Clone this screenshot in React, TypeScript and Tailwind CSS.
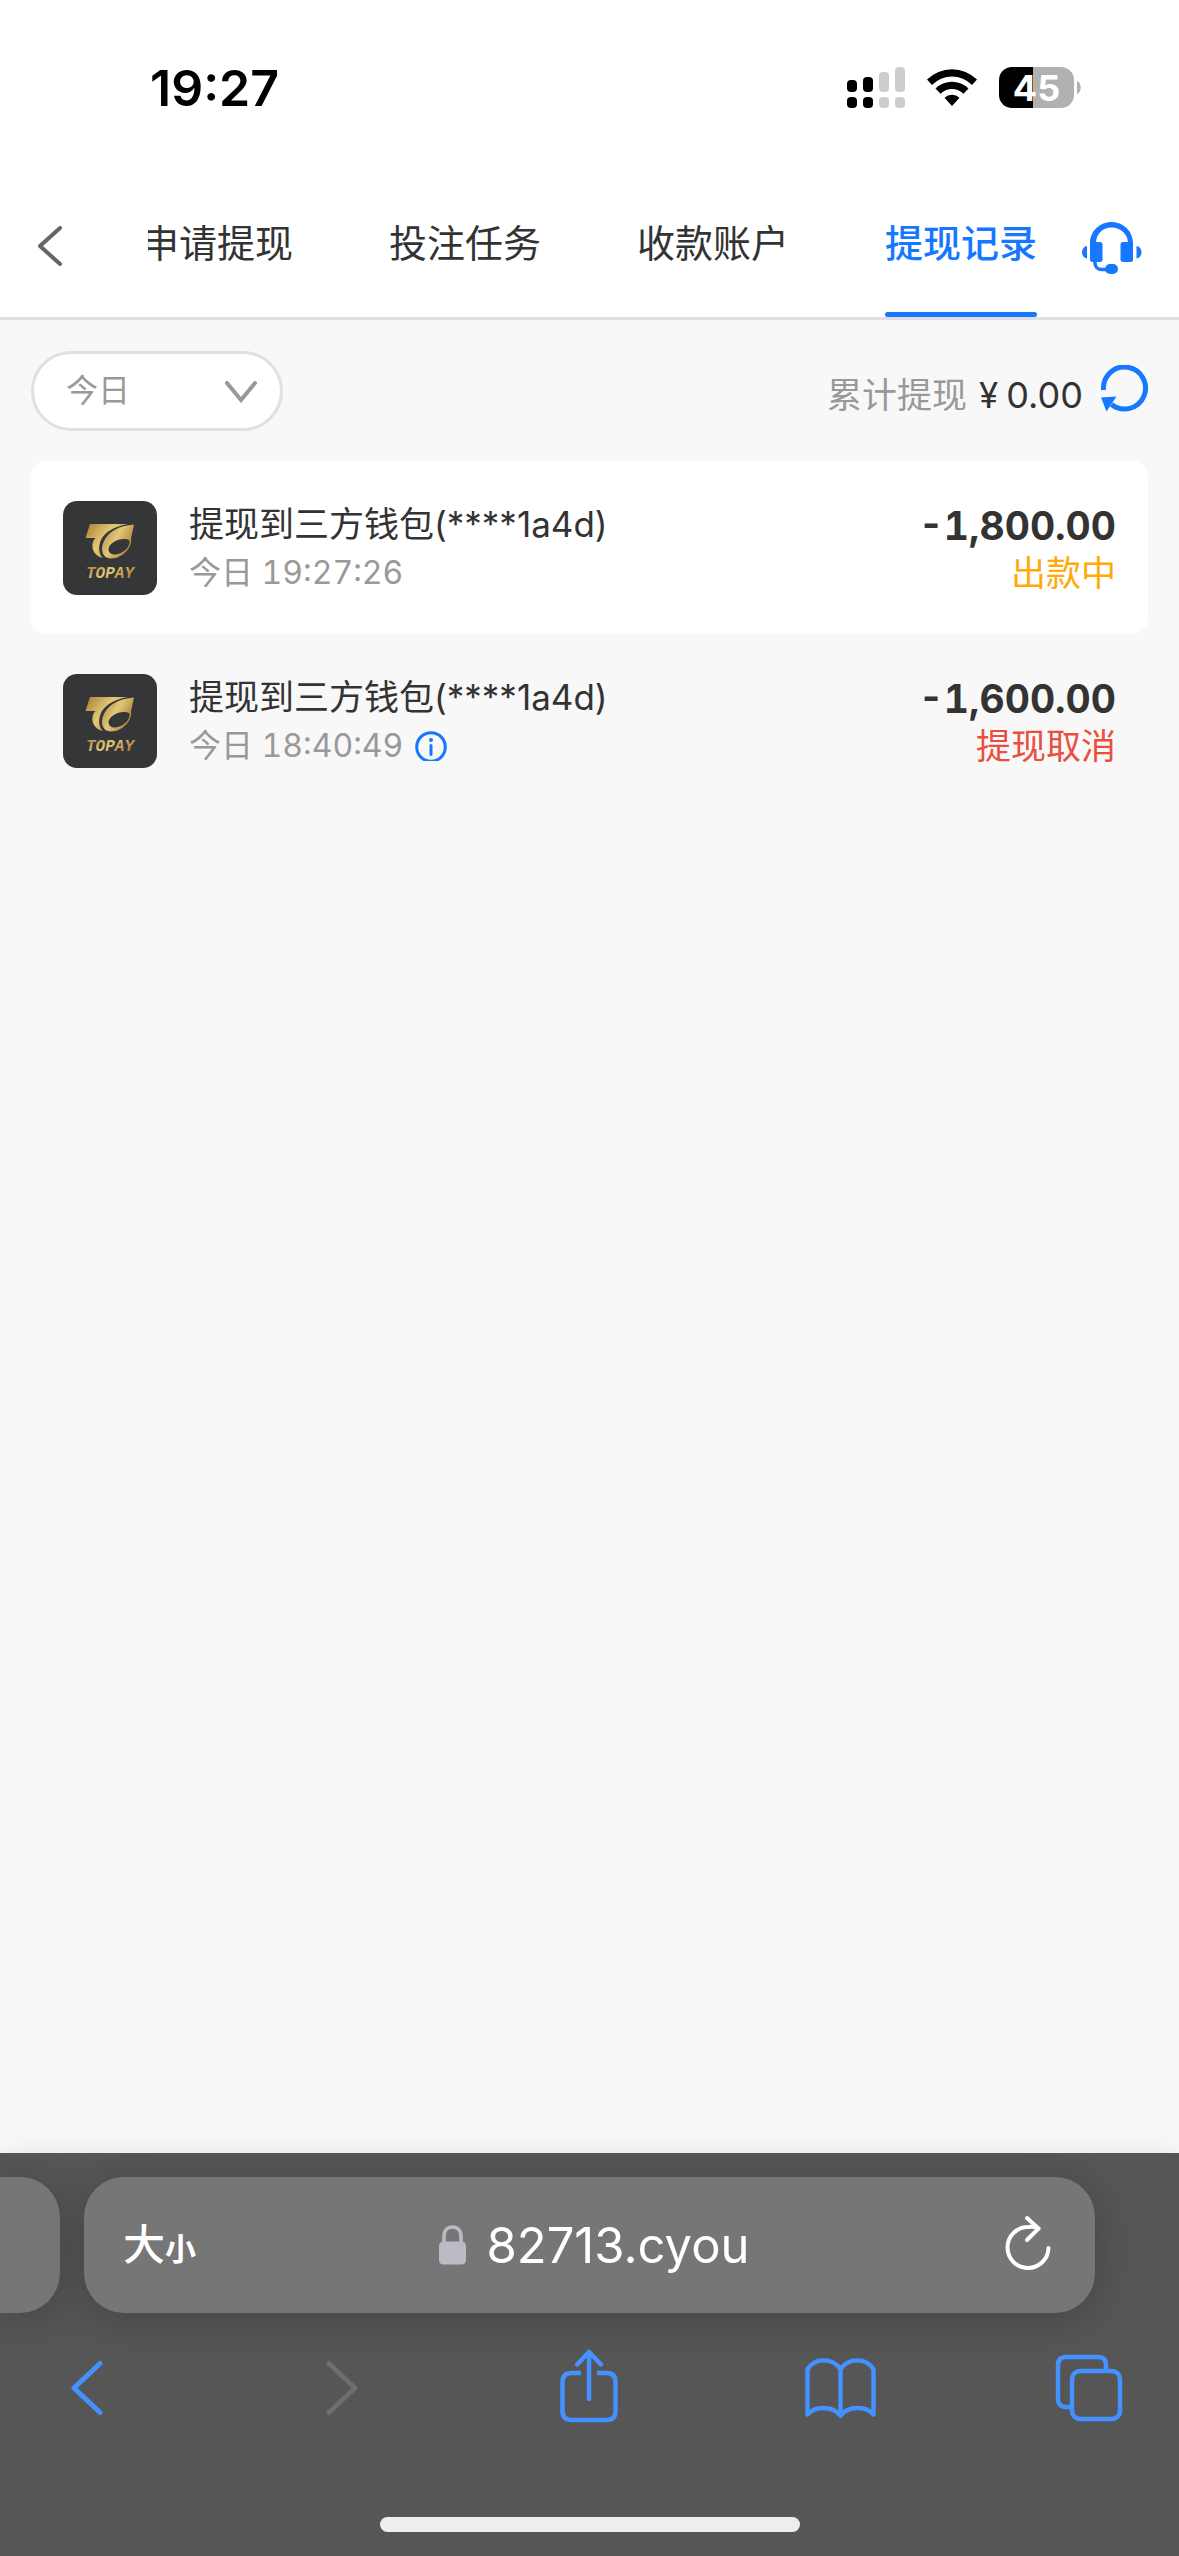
import React from "react";

const tabs = ["申请提现", "投注任务", "收款账户", "提现记录"];

type Entry = {
  title: string;
  time: string;
  info?: boolean;
  amount: string;
  status: string;
  tone: "pending" | "cancelled";
};

const entries: Entry[] = [
  { title: "提现到三方钱包(****1a4d)", time: "今日 19:27:26", amount: "-1,800.00", status: "出款中", tone: "pending" },
  { title: "提现到三方钱包(****1a4d)", time: "今日 18:40:49", info: true, amount: "-1,600.00", status: "提现取消", tone: "cancelled" },
];

function SignalIcon() {
  return (
    <svg width="58" height="41" viewBox="0 0 58 41" aria-hidden="true">
      <g fill="#000">
        <rect x="0" y="13" width="10" height="12" rx="4" />
        <rect x="16" y="10" width="10" height="15" rx="4" />
        <rect x="0" y="30" width="10" height="11" rx="4" />
        <rect x="16" y="30" width="10" height="11" rx="4" />
      </g>
      <g fill="#ccc">
        <rect x="32" y="5" width="10" height="20" rx="4" />
        <rect x="48" y="0" width="10" height="25" rx="4" />
        <rect x="32" y="30" width="10" height="11" rx="4" />
        <rect x="48" y="30" width="10" height="11" rx="4" />
      </g>
    </svg>
  );
}

function WifiIcon() {
  return (
    <svg width="50" height="37" viewBox="0 0 50 37" aria-hidden="true">
      <path d="M0 10.500a35.500 35.500 0 0 1 50 0L45 16a28 28 0 0 0-40 0z" />
      <path d="M8.500 19.500a23.500 23.500 0 0 1 33 0l-5 5.200a16.500 16.500 0 0 0-23 0z" />
      <path d="M17.500 28.800a11 11 0 0 1 15 0L25 37z" />
    </svg>
  );
}

function HeadsetIcon() {
  return (
    <svg width="60" height="52" viewBox="0 0 60 52" fill="#1678ff" aria-hidden="true">
      <path d="M8 26V21C8 9 18 0 29.500 0S51 9 51 21v5h-5v-5c0-9-7.500-15.500-16.500-15.500S14 12 14 21v2z" />
      <rect x="8" y="20" width="12.500" height="20" rx="2.500" />
      <rect x="38.500" y="20" width="12.500" height="20" rx="2.500" />
      <path d="M5 24v12.500C2 36 0 33.500 0 30.300S2 24.500 5 24z" />
      <path d="M54.500 24v12.500c3-.5 5-3 5-6.200s-2-5.800-5-6.300z" />
      <path d="M13 38v3c0 4 3 6.500 6.500 6.500H27" fill="none" stroke="#1678ff" strokeWidth="3.500" />
      <rect x="23" y="42" width="13" height="10" rx="5" />
    </svg>
  );
}

function RefreshIcon() {
  return (
    <svg width="47" height="47" viewBox="0 0 47 47" fill="none" aria-hidden="true">
      <path d="M2.600 25A21 21 0 1 1 10.500 39.500" stroke="#1678ff" strokeWidth="5" />
      <path d="M0 32.500 15.500 31.500 5.500 46.500z" fill="#1678ff" />
    </svg>
  );
}

function WalletLogo() {
  return (
    <svg className="shrink-0" width="94" height="94" viewBox="0 0 94 94" role="img" aria-label="TOPAY">
      <defs>
        <linearGradient id="gold" x1="0" y1="0" x2="1" y2="0.600">
          <stop offset="0" stopColor="#a87b35" />
          <stop offset="0.500" stopColor="#e3c878" />
          <stop offset="1" stopColor="#a67a32" />
        </linearGradient>
      </defs>
      <rect width="94" height="94" rx="14" fill="#353638" />
      <path
        fill="url(#gold)"
        d="M27 23H65C52 25.500 41 31 37.500 40 35 47 36 53 40 57 33 55.500 28.500 50 29.500 43 30 40 31 38 32.500 37H22.500z"
      />
      <path
        fill="url(#gold)"
        fillRule="evenodd"
        d="M71 23.500 68 37.500C69.500 46 60 57.500 48 57.500 39 57.500 37 48 41 40 45 31 56 24.500 71 23.500zM66.500 39.500C60 35 46 41 45.500 48 45.500 52 48.500 53.500 52 53.500 60 53 67.500 46 66.500 39.500z"
      />
      <text
        x="23"
        y="77"
        fill="url(#gold)"
        fontFamily="'Liberation Mono', monospace"
        fontSize="16"
        fontWeight="700"
        fontStyle="italic"
      >
        TOPAY
      </text>
    </svg>
  );
}

function InfoIcon() {
  return (
    <svg width="32" height="30" viewBox="0 0 32 30" fill="none" aria-hidden="true">
      <circle cx="16" cy="16" r="14.300" stroke="#1678ff" strokeWidth="3" />
      <circle cx="16" cy="9" r="2" fill="#1678ff" />
      <path d="M16 14.500v9" stroke="#1678ff" strokeWidth="3" strokeLinecap="round" />
    </svg>
  );
}

function StatusBar() {
  return (
    <div className="flex h-[175px] items-center justify-between pr-[98px] pl-[150px]">
      <span className="text-[50px] leading-none font-semibold text-black">19:27</span>
      <div className="flex items-center">
        <SignalIcon />
        <span className="ml-[22px]">
          <WifiIcon />
        </span>
        <div className="ml-[22px] flex h-[41px] w-[75px] items-center justify-center rounded-[13px] bg-linear-to-r from-black from-45% to-[#b1b1b1] to-45% text-[36px] leading-none font-bold text-white">
          45
        </div>
        <svg className="ml-[3px]" width="4" height="13" viewBox="0 0 4 13" fill="#b1b1b1" aria-hidden="true">
          <path d="M0 0c5 2 5 11 0 13z" />
        </svg>
      </div>
    </div>
  );
}

function NavBar() {
  return (
    <nav className="flex h-[145px] items-stretch border-b-[3px] border-[#e0e0e0] pr-[37px]">
      <button aria-label="返回" className="flex w-[148px] shrink-0 items-center pl-[37px]">
        <svg width="26" height="40" viewBox="0 0 26 40" fill="none" stroke="#666" strokeWidth="4" strokeLinecap="round" strokeLinejoin="round" aria-hidden="true">
          <path d="M23 2 3 20l20 18" />
        </svg>
      </button>
      <div role="tablist" className="flex min-w-0 flex-1 justify-end gap-24 overflow-hidden">
        {tabs.map((tab, i) => {
          const active = i === 3;
          return (
            <button
              key={tab}
              role="tab"
              aria-selected={active}
              className={
                active
                  ? "flex shrink-0 flex-col items-center text-[38px] leading-[137px] font-medium text-[#1678ff]"
                  : "flex shrink-0 flex-col items-center text-[38px] leading-[137px] text-[#333]"
              }
            >
              {tab}
              {active && <span className="h-[5px] w-full rounded-full bg-[#1678ff]" />}
            </button>
          );
        })}
      </div>
      <button aria-label="客服" className="ml-[45px] flex shrink-0 items-center pt-1">
        <HeadsetIcon />
      </button>
    </nav>
  );
}

function FilterRow() {
  return (
    <div className="flex h-[141px] items-center justify-between px-[31px]">
      <div className="relative">
        <select
          aria-label="日期"
          className="h-20 w-[252px] appearance-none rounded-full border-[3px] border-[#e0e0e0] bg-white pl-8 text-[32px] text-[#999]"
        >
          <option>今日</option>
        </select>
        <svg className="pointer-events-none absolute top-[30px] right-[25px]" width="34" height="22" viewBox="0 0 34 22" fill="none" stroke="#999" strokeWidth="4" strokeLinecap="round" aria-hidden="true">
          <path d="M3 2l14 17L31 2" />
        </svg>
      </div>
      <div className="flex items-center leading-none">
        <p className="flex items-baseline pt-2 text-[35px]">
          <span className="text-[#999]">累计提现</span>
          <span className="ml-3 text-[#333]">¥</span>
          <span className="ml-2 text-[36px] text-[#333]">0.00</span>
        </p>
        <button aria-label="刷新" className="mb-1 ml-[18px]">
          <RefreshIcon />
        </button>
      </div>
    </div>
  );
}

function EntryRow({ entry, raised }: { entry: Entry; raised: boolean }) {
  return (
    <li
      className={
        raised
          ? "flex h-[173px] items-center rounded-2xl bg-white px-8"
          : "flex h-[173px] items-center rounded-2xl px-8"
      }
    >
      <WalletLogo />
      <div className="ml-8 flex-1 pt-0.5">
        <p className="text-[35px] leading-[48px] text-[#333]">{entry.title}</p>
        <p className="flex items-center text-[32px] leading-[50px] text-[#999] tabular-nums">
          {entry.time}
          {entry.info && (
            <button aria-label="详情" className="ml-3">
              <InfoIcon />
            </button>
          )}
        </p>
      </div>
      <div className="text-right">
        <p className="text-[39px] leading-[50px] font-bold text-[#333] tabular-nums">{entry.amount}</p>
        <p
          className={
            entry.tone === "pending"
              ? "text-[35px] leading-[44px] text-[#ffaa09]"
              : "text-[35px] leading-[44px] text-[#ea4e3d]"
          }
        >
          {entry.status}
        </p>
      </div>
    </li>
  );
}

function BrowserBar() {
  return (
    <footer className="overflow-hidden bg-[#565656] pt-6 pb-6 shadow-[0_0_24px_rgba(0,0,0,0.08)]">
      <div className="flex gap-6">
        <div className="h-[136px] w-[60px] shrink-0 rounded-r-[40px] bg-[#767676] shadow-[0_6px_40px_rgba(0,0,0,0.2)]" />
        <div className="mr-[84px] flex h-[136px] flex-1 items-center justify-between rounded-[40px] bg-[#767676] pr-[43px] pl-[39px] text-white shadow-[0_6px_40px_rgba(0,0,0,0.2)]">
          <button aria-label="页面设置" className="flex w-[130px] items-baseline leading-none">
            <span className="text-[42px] font-medium">大</span>
            <span className="text-[31px] font-bold">小</span>
          </button>
          <div className="flex items-center">
            <svg width="27" height="40" viewBox="0 0 27 40" fill="none" aria-hidden="true">
              <path d="M5 18V11.500C5 5.500 8.500 2 13.500 2S22 5.500 22 11.500V18" stroke="#bcbbc4" strokeWidth="3.500" />
              <rect y="16.500" width="27" height="23" rx="4.500" fill="#bcbbc4" />
            </svg>
            <span className="ml-5 text-[49px] leading-none">82713.cyou</span>
          </div>
          <button aria-label="重新载入" className="flex w-[116px] justify-end pb-1">
            <svg width="48" height="56" viewBox="0 0 48 56" fill="none" stroke="#fff" strokeWidth="4" strokeLinecap="round" strokeLinejoin="round" aria-hidden="true">
              <path d="M34.500 13.500C31 12 28 11.500 24 12A20.500 20.500 0 1 0 44.500 33" />
              <path d="M23 3 34.500 13.500 23 25" />
            </svg>
          </button>
        </div>
      </div>
      <div className="flex h-[150px] items-center justify-between pr-[55px] pl-[69px]">
        <button aria-label="后退" className="w-[70px]">
          <svg width="34" height="56" viewBox="0 0 34 56" fill="none" stroke="#4492ff" strokeWidth="5" strokeLinecap="round" strokeLinejoin="round" aria-hidden="true">
            <path d="M31 3.500 5 28l26 24.500" />
          </svg>
        </button>
        <button aria-label="前进" className="w-[70px] pl-3" disabled>
          <svg width="34" height="56" viewBox="0 0 34 56" fill="none" stroke="#6e6e6e" strokeWidth="5" strokeLinecap="round" strokeLinejoin="round" aria-hidden="true">
            <path d="M3 3.500 29 28 3 52.500" />
          </svg>
        </button>
        <button aria-label="分享" className="w-[70px] pb-1">
          <svg width="58" height="74" viewBox="0 0 58 74" fill="none" stroke="#4492ff" strokeWidth="4.500" strokeLinecap="round" strokeLinejoin="round" aria-hidden="true">
            <path d="M29 50V3.500M17 15.500 29 3l12 12.500" />
            <path strokeLinecap="butt" d="M21 24h-9.500Q2.500 24 2.500 33v29q0 9 9 9h35q9 0 9-9V33q0-9-9-9H37" />
          </svg>
        </button>
        <button aria-label="书签" className="w-[74px]">
          <svg width="71" height="62" viewBox="0 0 72 62" fill="none" stroke="#4492ff" strokeWidth="4.500" strokeLinecap="round" strokeLinejoin="round" aria-hidden="true">
            <path d="M36 12C28 0 10 0 2.500 12v46C10 49 28 49 36 59 44 49 62 49 69.500 58V12C62 0 44 0 36 12zV59" />
          </svg>
        </button>
        <button aria-label="标签页" className="w-[70px]">
          <svg width="70" height="68" viewBox="0 0 70 68" fill="none" stroke="#4492ff" strokeWidth="4.500" aria-hidden="true">
            <rect x="18" y="17" width="48" height="48" rx="8" />
            <path d="M18 53h-6q-8 0-8-8V11q0-8 8-8h32q8 0 8 8v6" />
          </svg>
        </button>
      </div>
      <div className="mx-auto mt-[54px] h-[15px] w-[420px] rounded-full bg-[#eee]" />
    </footer>
  );
}

export default function App() {
  return (
    <div className="flex min-h-screen flex-col bg-[#f8f8f8] font-[Inter,'Noto_Sans_CJK_SC',sans-serif]">
      <header className="bg-white">
        <StatusBar />
        <NavBar />
      </header>
      <main className="flex-1">
        <FilterRow />
        <ul className="px-[31px]">
          {entries.map((entry, i) => (
            <EntryRow key={entry.time} entry={entry} raised={i % 2 === 0} />
          ))}
        </ul>
      </main>
      <BrowserBar />
    </div>
  );
}
